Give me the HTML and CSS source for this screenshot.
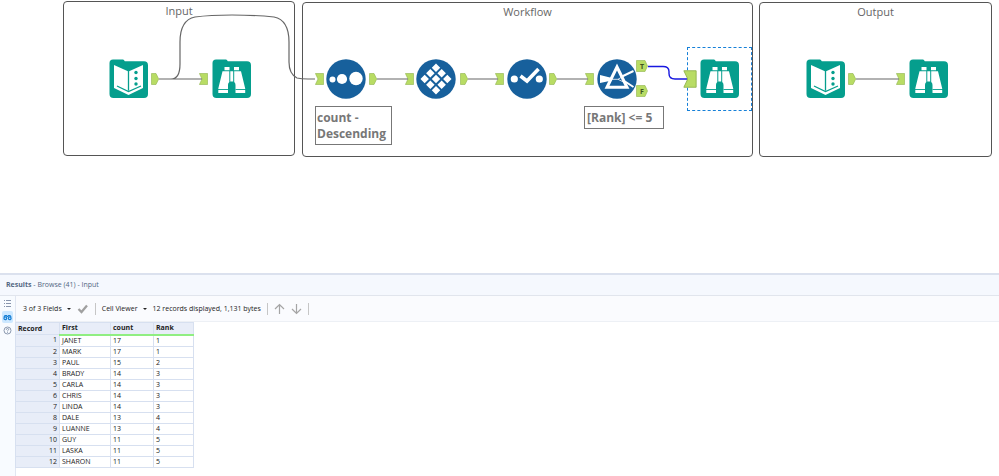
FILE: index.html
```html
<!DOCTYPE html>
<html lang="en">
<head>
<meta charset="utf-8">
<title>Workflow</title>
<link rel="stylesheet" href="styles.css">
</head>
<body>
<svg class="defs" aria-hidden="true">
  <defs>
    <symbol id="book" viewBox="0 0 40 40">
      <path fill="#059e8d" d="M4 .5h10q1 0 1.800 1.800H35q4 0 4 4V35q0 4-4 4H4.500q-4 0-4-4V4Q.5.5 4 .5z"/>
      <path fill="#fff" d="M5 6l14.500 6.500L34 6v23l-14.500 7L5 29z"/>
      <path fill="none" stroke="#059e8d" stroke-width="1.300" d="M19.500 12v19.500M8 27l11.500 5.500L32 27"/>
      <g fill="#059e8d"><circle cx="27" cy="13.500" r="1.700"/><circle cx="27" cy="19.500" r="1.700"/><circle cx="27" cy="25" r="1.700"/></g>
    </symbol>
    <symbol id="binoculars" viewBox="0 0 40 40">
      <path fill="#059e8d" d="M4 .5h10q1 0 1.800 1.800H35q4 0 4 4V35q0 4-4 4H4.500q-4 0-4-4V4Q.5.5 4 .5z"/>
      <path fill="#fff" d="M12.500 8h5v3.200h-5zM22 8h5v3.200h-5zM10.500 12.200h6.800V23q-1.300 1-1.300 3v8H6.300v-4.500zM18.300 12.200h2.900V22.500h-2.900zM22.200 12.200H29l4.200 17.300V34h-9.700v-8q0-2-1.300-3z"/>
      <path stroke="#059e8d" stroke-width=".9" d="M6 30.500h10M23.500 30.500H34"/>
    </symbol>
    <symbol id="sort" viewBox="0 0 40 40">
      <circle cx="20" cy="20" r="19.700" fill="#17609c"/>
      <g fill="#fff"><circle cx="6.500" cy="20.500" r="3"/><circle cx="16" cy="20" r="5.100"/><circle cx="30" cy="19.500" r="6.700"/></g>
    </symbol>
    <symbol id="record" viewBox="0 0 40 40">
      <circle cx="20" cy="20" r="19.700" fill="#17609c"/>
      <g fill="#fff" transform="translate(20 20) rotate(45)">
        <path d="M-11-11h6v6h-6zM-3-11h6v6h-6zM5-11h6v6H5zM-11-3h6v6h-6zM-3-3h6v6h-6zM5-3h6v6H5zM-11 5h6v6h-6zM-3 5h6v6h-6zM5 5h6v6H5z"/>
      </g>
    </symbol>
    <symbol id="select" viewBox="0 0 40 40">
      <circle cx="20" cy="20" r="19.700" fill="#17609c"/>
      <g fill="#fff"><circle cx="7.300" cy="20" r="3.600"/><circle cx="32.300" cy="20" r="3.600"/></g>
      <path fill="none" stroke="#fff" stroke-width="3.600" d="M13.500 17l6.500 5L31.500 10"/>
    </symbol>
    <symbol id="filter" viewBox="0 0 40 40">
      <circle cx="20" cy="20" r="19.700" fill="#17609c"/>
      <path fill="#fff" d="M3 16l12 3v2.500L3 24z"/>
      <path fill="none" stroke="#fff" stroke-width="2" d="M25 17.500L36.500 12M28 22.500l8.500 5.500"/>
      <path fill="none" stroke="#fff" stroke-width="3" d="M20 8L10 28.300h20z"/>
      <path fill="none" stroke="#fff" stroke-width=".8" d="M14 20.300h7l5-3M21 20.300l6 3"/>
    </symbol>
    <symbol id="out" viewBox="0 0 8 12"><path fill="#b8dc64" stroke="#91b34e" stroke-width=".6" d="M.5.5H5L7.700 6 5 11.500H.5z"/></symbol>
    <symbol id="in" viewBox="0 0 9 12"><path fill="#b8dc64" stroke="#91b34e" stroke-width=".6" d="M.4.500h8.200v11H.4L3 6z"/></symbol>
    <symbol id="port" viewBox="0 0 12 12"><path fill="#b8dc64" stroke="#91b34e" stroke-width=".6" d="M.5.500H9L11.500 6 9 11.500H.5z"/></symbol>
  </defs>
</svg>

<main class="canvas">
  <section class="container input-box"><h2>Input</h2></section>
  <section class="container workflow-box"><h2>Workflow</h2></section>
  <section class="container output-box"><h2>Output</h2></section>

  <div class="selection"></div>
  <svg class="tools" width="999" height="272" role="img" aria-label="Connected workflow tools">
    <use href="#out" x="151" y="73" width="8" height="12"/>
    <use href="#in" x="199" y="73" width="9" height="12"/>
    <use href="#in" x="315" y="73" width="9" height="12"/>
    <use href="#out" x="369" y="73" width="8" height="12"/>
    <use href="#in" x="405" y="73" width="9" height="12"/>
    <use href="#out" x="460" y="73" width="8" height="12"/>
    <use href="#in" x="495" y="73" width="9" height="12"/>
    <use href="#out" x="549" y="73" width="8" height="12"/>
    <use href="#in" x="585" y="73" width="9" height="12"/>
    <use href="#port" x="636" y="60" width="12" height="12"/>
    <use href="#port" x="636" y="85" width="12" height="12"/>
    <use href="#in" x="683" y="70" width="14" height="18"/>
    <use href="#out" x="848" y="73" width="8" height="12"/>
    <use href="#in" x="896" y="73" width="9" height="12"/>
    <g class="wire">
      <path d="M159 79h43M159 79h12q9 0 9-15V42q0-22 15-25 15-2 37-2t42 2q15 3 15 25v20q0 12 8 16 4 1 11 1h7"/>
      <path d="M377 79h31M468 79h30M557 79h31M856 79h43"/>
    </g>
    <path class="wire-active" d="M648 66.500h15q6 0 6 5v2q0 5.500 6 5.500h12"/>
    <use href="#book" x="109" y="59" width="40" height="40"/>
    <use href="#binoculars" x="212" y="59" width="40" height="40"/>
    <use href="#sort" x="326" y="59" width="40" height="40"/>
    <use href="#record" x="416" y="59" width="40" height="40"/>
    <use href="#select" x="507" y="59" width="40" height="40"/>
    <use href="#filter" x="597" y="59" width="40" height="40"/>
    <use href="#binoculars" x="700" y="59" width="40" height="40"/>
    <use href="#book" x="806" y="59" width="40" height="40"/>
    <use href="#binoculars" x="909" y="59" width="40" height="40"/>
    <text class="port-label" x="640" y="69">T</text>
    <text class="port-label" x="640" y="94">F</text>
  </svg>
  <p class="note note-sort">count -<br>Descending</p>
  <p class="note note-filter">[Rank] &lt;= 5</p>
</main>

<section class="results">
  <header class="results-title"><b>Results</b> - Browse (41) - Input</header>
  <div class="results-body">
    <nav class="rail">
      <button aria-label="Messages"><svg width="9" height="9" viewBox="0 0 9 9"><path d="M1 1.500h1M3 1.500h5M1 4.500h1M3 4.500h5M1 7.500h1M3 7.500h5" stroke="#8794ac"/></svg></button>
      <button class="active" aria-label="Data"><svg width="9" height="9" viewBox="0 0 9 9"><path d="M1 4l1-1.500h1.500l.5 1h1l.5-1H7L8 4" fill="none" stroke="#177fd5" stroke-width="1.200"/><circle cx="2.300" cy="5.300" r="1.400" fill="none" stroke="#177fd5" stroke-width="1.200"/><circle cx="6.700" cy="5.300" r="1.400" fill="none" stroke="#177fd5" stroke-width="1.200"/></svg></button>
      <button aria-label="Help"><svg width="9" height="9" viewBox="0 0 9 9"><circle cx="4.500" cy="4.500" r="3.500" fill="none" stroke="#71819c" stroke-width=".8"/><path d="M3.300 3.800q0-1.300 1.200-1.300t1.200 1q0 .6-1.200 1.300v.5M4.500 6v.8" fill="none" stroke="#71819c" stroke-width=".8"/></svg></button>
    </nav>
    <div class="results-main">
      <div class="toolbar">
        <button class="menu">3 of 3 Fields<i class="caret"></i></button>
        <button aria-label="Apply"><svg width="12" height="10" viewBox="0 0 12 10"><path d="M1.500 5L4.500 8l5.500-6.500" fill="none" stroke="#a0a0a0" stroke-width="2.300"/></svg></button>
        <i class="sep"></i>
        <button class="menu">Cell Viewer<i class="caret"></i></button>
        <span class="status">12 records displayed, 1,131 bytes</span>
        <i class="sep"></i>
        <button aria-label="Previous"><svg width="11" height="12" viewBox="0 0 11 12"><path d="M5.500 11V1.500M1 6l4.500-4.500L10 6" fill="none" stroke="#a5a5a5" stroke-width="1.200"/></svg></button>
        <button aria-label="Next"><svg width="11" height="12" viewBox="0 0 11 12"><path d="M5.500 1v9.500M1 6l4.500 4.500L10 6" fill="none" stroke="#a5a5a5" stroke-width="1.200"/></svg></button>
        <i class="sep"></i>
      </div>
      <div class="grid-area">
        <table>
          <colgroup><col class="c-record"><col class="c-first"><col class="c-count"><col class="c-rank"></colgroup>
          <thead><tr><th scope="col">Record</th><th scope="col">First</th><th scope="col">count</th><th scope="col">Rank</th></tr></thead>
          <tbody>
            <tr><th scope="row">1</th><td>JANET</td><td>17</td><td>1</td></tr>
            <tr><th scope="row">2</th><td>MARK</td><td>17</td><td>1</td></tr>
            <tr><th scope="row">3</th><td>PAUL</td><td>15</td><td>2</td></tr>
            <tr><th scope="row">4</th><td>BRADY</td><td>14</td><td>3</td></tr>
            <tr><th scope="row">5</th><td>CARLA</td><td>14</td><td>3</td></tr>
            <tr><th scope="row">6</th><td>CHRIS</td><td>14</td><td>3</td></tr>
            <tr><th scope="row">7</th><td>LINDA</td><td>14</td><td>3</td></tr>
            <tr><th scope="row">8</th><td>DALE</td><td>13</td><td>4</td></tr>
            <tr><th scope="row">9</th><td>LUANNE</td><td>13</td><td>4</td></tr>
            <tr><th scope="row">10</th><td>GUY</td><td>11</td><td>5</td></tr>
            <tr><th scope="row">11</th><td>LASKA</td><td>11</td><td>5</td></tr>
            <tr><th scope="row">12</th><td>SHARON</td><td>11</td><td>5</td></tr>
          </tbody>
        </table>
      </div>
    </div>
  </div>
</section>
</body>
</html>
```
FILE: styles.css
```css
* { box-sizing: border-box; }
body {
  margin: 0;
  min-height: 100vh;
  display: flex;
  flex-direction: column;
  background: #fff;
  font: 7px/10px "Open Sans", "Noto Sans", sans-serif;
  color: #222;
}
button { display: flex; align-items: center; border: 0; padding: 0; background: none; font: inherit; color: inherit; }
.defs { position: absolute; width: 0; height: 0; }

/* Canvas: containers and tools are freely placed */
.canvas { position: relative; height: 273px; overflow: hidden; }
.container { position: absolute; height: 155px; border: 1px solid #555; border-radius: 4px; }
.container h2 { margin: 1px 0 0; font-size: 11px; line-height: 15px; font-weight: 400; color: #666; text-align: center; }
.input-box { left: 63px; top: 1px; width: 232px; }
.workflow-box { left: 302px; top: 2px; width: 451px; }
.output-box { left: 759px; top: 2px; width: 233px; }
.tools { position: absolute; left: 0; top: 0; }
.wire { fill: none; stroke: #666; stroke-width: 1.2; }
.wire-active { fill: none; stroke: #1818e0; stroke-width: 1.4; }
.port-label { font-size: 7px; font-weight: 700; fill: #3f5320; }
.selection { position: absolute; left: 687px; top: 47px; width: 65px; height: 64px; border: 1px dashed #1680d8; }
.note { position: absolute; margin: 0; padding: 3px 1px; border: 1px solid #777; background: #fff; font-size: 12px; line-height: 16px; font-weight: 700; color: #777; white-space: nowrap; }
.note-sort { left: 315px; top: 106px; width: 77px; height: 39px; }
.note-filter { left: 584px; top: 106px; width: 80px; height: 23px; padding-left: 2px; }

/* Results pane */
.results { flex: 1; display: flex; flex-direction: column; border-top: 2px solid #dbe1ee; }
.results-title { height: 21px; padding: 5px 6px; background: #f5f8fe; border-bottom: 1px solid #e1e5ed; color: #526782; }
.results-body { flex: 1; display: flex; }
.rail { width: 15px; padding-top: 1px; display: flex; flex-direction: column; gap: 1px; align-items: center; background: #f8fbff; }
.rail button { width: 11px; height: 13px; justify-content: center; border-radius: 2px; }
.rail .active { background: #cde8ff; height: 12px; }
.results-main { flex: 1; box-shadow: inset 1px 0 #e1e6f1; }
.toolbar { height: 26px; display: flex; align-items: center; gap: 6px; margin-left: 1px; padding-left: 7px; background: #fafbfe; border-bottom: 1px solid #edf0f5; }
.menu { gap: 5px; white-space: nowrap; }
.caret { border: 2px solid transparent; border-top-color: #222; border-bottom: 0; }
.sep { width: 1px; height: 12px; background: #c6c6c6; }
.grid-area { display: flex; }
table { border-collapse: collapse; table-layout: fixed; width: 178px; }
.c-record { width: 44px; }
.c-first { width: 51px; }
.c-count { width: 43px; }
.c-rank { width: 40px; }
th, td { height: 11px; padding: 0 2px; line-height: 10px; text-align: left; border: 1px solid #d7e0f0; white-space: nowrap; }
th { background: #e8edf8; }
tbody th { text-align: right; font-weight: 400; }
thead th { height: 12px; }
thead th + th { border-bottom: 2px solid #90ee82; }
```
